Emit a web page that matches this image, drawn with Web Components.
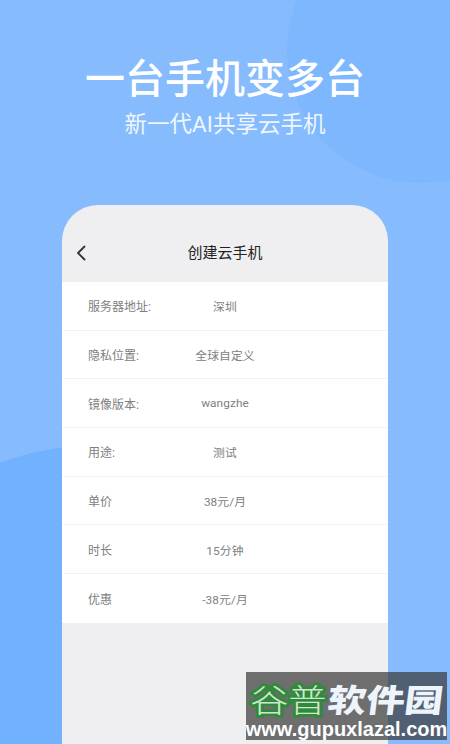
<!DOCTYPE html>
<html>
<head>
<meta charset="utf-8">
<style>
	html, body { margin: 0; padding: 0; }
	body { width: 450px; height: 744px; overflow: hidden; font-family: Roboto, "Noto Sans CJK SC", sans-serif; }
</style>
</head>
<body>
<promo-screen>
	<promo-heading slot="heading" title="一台手机变多台" subtitle="新一代AI共享云手机"></promo-heading>
	<phone-card slot="card" heading="创建云手机">
		<info-row label="服务器地址:" value="深圳"></info-row>
		<info-row label="隐私位置:" value="全球自定义"></info-row>
		<info-row label="镜像版本:" value="wangzhe"></info-row>
		<info-row label="用途:" value="测试"></info-row>
		<info-row label="单价" value="38元/月"></info-row>
		<info-row label="时长" value="15分钟"></info-row>
		<info-row label="优惠" value="-38元/月"></info-row>
	</phone-card>
	<site-badge slot="badge"></site-badge>
</promo-screen>
<script>
const promoScreenTemplate = document.createElement('template');
promoScreenTemplate.innerHTML = `
	<style>
		:host {
			display: flex;
			flex-direction: column;
			align-items: center;
			position: relative;
			width: 450px;
			height: 744px;
			overflow: hidden;
			background: #86bcfd;
		}
		.circle {
			position: absolute;
			border-radius: 50%;
			background: #7db8fe;
		}
		.top {
			left: 287px;
			top: -83px;
			width: 266px;
			height: 266px;
		}
		.bottom {
			left: -168px;
			top: 446px;
			width: 520px;
			height: 520px;
			background: #72b1fe;
		}
		.content {
			position: relative;
			display: flex;
			flex-direction: column;
			align-items: center;
			width: 100%;
			flex: 1;
			min-height: 0;
		}
	</style>
	<div class="circle top"></div>
	<div class="circle bottom"></div>
	<div class="content">
		<slot name="heading"></slot>
		<slot name="card"></slot>
	</div>
	<slot name="badge"></slot>
`
class PromoScreen extends HTMLElement {
	constructor() {
		super()
		this.attachShadow({ mode: 'open' }).appendChild(promoScreenTemplate.content.cloneNode(true))
	}
}
window.customElements.define('promo-screen', PromoScreen)

const promoHeadingTemplate = document.createElement('template');
promoHeadingTemplate.innerHTML = `
	<style>
		:host {
			display: flex;
			flex-direction: column;
			align-items: center;
			height: 205px;
			box-sizing: border-box;
			padding-top: 55px;
			color: #fff;
		}
		h1 {
			margin: 0;
			font-size: 40px;
			line-height: 50px;
			font-weight: 500;
		}
		p {
			margin: 5px 0 0;
			font-size: 22.5px;
			line-height: 28px;
			font-weight: 400;
			color: #eef6ff;
		}
	</style>
	<h1></h1>
	<p></p>
`
class PromoHeading extends HTMLElement {
	constructor() {
		super()
		this._shadowRoot = this.attachShadow({ mode: 'open' })
		this._shadowRoot.appendChild(promoHeadingTemplate.content.cloneNode(true))
		this._shadowRoot.querySelector('h1').textContent = this.getAttribute('title')
		this._shadowRoot.querySelector('p').textContent = this.getAttribute('subtitle')
	}
}
window.customElements.define('promo-heading', PromoHeading)

const phoneCardTemplate = document.createElement('template');
phoneCardTemplate.innerHTML = `
	<style>
		:host {
			display: flex;
			flex-direction: column;
			width: 326px;
			height: 539px;
			border-radius: 36px 36px 0 0;
			background: #efeff1;
			overflow: hidden;
		}
		.bar {
			position: relative;
			display: flex;
			align-items: center;
			justify-content: center;
			height: 77px;
			box-sizing: border-box;
			padding-top: 16px;
			font-size: 15px;
			color: #222;
		}
		svg {
			position: absolute;
			left: 13px;
			top: 40px;
		}
		.rows {
			display: flex;
			flex-direction: column;
			background: #fff;
		}
	</style>
	<div class="bar">
		<svg width="12" height="16" viewBox="0 0 12 16" fill="none" stroke="#333" stroke-width="1.8" stroke-linecap="round" stroke-linejoin="round"><path d="M9.5 1.5 L3 8 L9.5 14.5"/></svg>
		<span class="title"></span>
	</div>
	<div class="rows"><slot></slot></div>
`
class PhoneCard extends HTMLElement {
	constructor() {
		super()
		this._shadowRoot = this.attachShadow({ mode: 'open' })
		this._shadowRoot.appendChild(phoneCardTemplate.content.cloneNode(true))
		this._shadowRoot.querySelector('.title').textContent = this.getAttribute('heading')
	}
}
window.customElements.define('phone-card', PhoneCard)

const infoRowTemplate = document.createElement('template');
infoRowTemplate.innerHTML = `
	<style>
		:host {
			display: block;
			position: relative;
			height: 48.7px;
			box-sizing: border-box;
			border-bottom: 1px solid #f3f3f5;
			font-size: 12px;
			color: #808080;
		}
		:host(:last-child) {
			border-bottom: none;
		}
		.inner {
			display: grid;
			grid-template-columns: 1fr;
			align-items: center;
			height: 100%;
			padding: 0 26px;
		}
		.label, .value {
			grid-area: 1 / 1;
		}
		.value {
			justify-self: center;
			font-size: 11.8px;
			letter-spacing: 0.1px;
		}
	</style>
	<div class="inner">
		<span class="label"></span>
		<span class="value"></span>
	</div>
`
class InfoRow extends HTMLElement {
	constructor() {
		super()
		this._shadowRoot = this.attachShadow({ mode: 'open' })
		this._shadowRoot.appendChild(infoRowTemplate.content.cloneNode(true))
		this._shadowRoot.querySelector('.label').textContent = this.getAttribute('label')
		this._shadowRoot.querySelector('.value').textContent = this.getAttribute('value')
	}
}
window.customElements.define('info-row', InfoRow)

const siteBadgeTemplate = document.createElement('template');
siteBadgeTemplate.innerHTML = `
	<style>
		:host {
			position: absolute;
			left: 246px;
			top: 672px;
			width: 201px;
			height: 68px;
			display: flex;
			flex-direction: column;
			align-items: center;
			box-sizing: border-box;
			padding-top: 12px;
			background: rgba(60, 60, 60, 0.72);
			overflow: hidden;
		}
		.name {
			display: flex;
			font-size: 32px;
			line-height: 35px;
			font-weight: 900;
			color: #eef4fc;
			transform: scaleX(1.2);
		}
		.green {
			color: #cfe6cc;
			font-weight: 300;
			-webkit-text-stroke: 5px #2f8a3c;
			paint-order: stroke fill;
			margin-right: 1px;
		}
		.slant {
			transform: skewX(-6deg);
		}
		.url {
			font-family: "Liberation Sans", sans-serif;
			font-size: 20px;
			line-height: 20px;
			font-weight: 700;
			color: #fff;
			white-space: nowrap;
		}
	</style>
	<div class="name"><span class="green">谷普</span><span class="slant">软件园</span></div>
	<div class="url">www.gupuxlazal.com</div>
`
class SiteBadge extends HTMLElement {
	constructor() {
		super()
		this.attachShadow({ mode: 'open' }).appendChild(siteBadgeTemplate.content.cloneNode(true))
	}
}
window.customElements.define('site-badge', SiteBadge)
</script>
</body>
</html>
